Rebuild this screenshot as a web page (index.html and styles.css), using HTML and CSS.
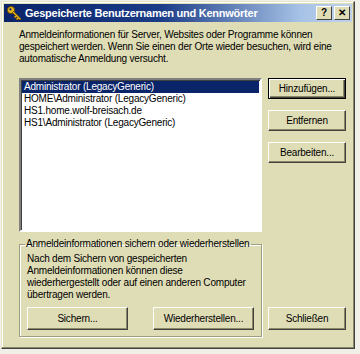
FILE: index.html
```html
<!DOCTYPE html>
<html>
<head>
    <title>Gespeicherte Benutzernamen und Kennwörter</title>
    <link rel="stylesheet" href="styles.css">
</head>
<body>
    <div class="window">
        <div class="titlebar">
            <svg class="title-icon" width="16" height="16" viewBox="0 0 16 16">
                <circle cx="5" cy="5" r="3.6" fill="#e8b820" stroke="#6b4a00" stroke-width="1"/>
                <circle cx="4.4" cy="4.4" r="1.1" fill="#0a246a"/>
                <path d="M7.5 7.5 L14 14 M10.5 10.5 L9 12 M12.5 12.5 L11 14" stroke="#6b4a00" stroke-width="2.4" stroke-linecap="round"/>
                <path d="M7.5 7.5 L14 14 M10.5 10.5 L9 12 M12.5 12.5 L11 14" stroke="#e8b820" stroke-width="1.1" stroke-linecap="round"/>
            </svg>
            <span class="title-text">Gespeicherte Benutzernamen und Kennwörter</span>
            <div class="title-buttons">
                <span class="tbtn">?</span>
                <span class="tbtn">✕</span>
            </div>
        </div>

        <div class="content">
            <p class="intro">Anmeldeinformationen für Server, Websites oder Programme können<br>gespeichert werden. Wenn Sie einen der Orte wieder besuchen, wird eine<br>automatische Anmeldung versucht.</p>

            <div class="main-row">
                <div class="left-col">
                    <div class="listbox">
                        <div class="item selected">Administrator (LegacyGeneric)</div>
                        <div class="item">HOME\Administrator (LegacyGeneric)</div>
                        <div class="item">HS1.home.wolf-breisach.de</div>
                        <div class="item">HS1\Administrator (LegacyGeneric)</div>
                    </div>

                    <fieldset class="group">
                        <legend>Anmeldeinformationen sichern oder wiederherstellen</legend>
                        <p class="group-text">Nach dem Sichern von gespeicherten<br>Anmeldeinformationen können diese<br>wiederhergestellt oder auf einen anderen Computer<br>übertragen werden.</p>
                        <div class="group-buttons">
                            <button type="button" class="btn wide">Sichern...</button>
                            <button type="button" class="btn wide">Wiederherstellen...</button>
                        </div>
                    </fieldset>
                </div>

                <div class="right-col">
                    <button type="button" class="btn default">Hinzufügen...</button>
                    <button type="button" class="btn">Entfernen</button>
                    <button type="button" class="btn">Bearbeiten...</button>
                    <div class="spacer"></div>
                    <button type="button" class="btn tall">Schließen</button>
                </div>
            </div>
        </div>
    </div>
</body>
</html>
```

FILE: styles.css
```css
body {
    margin: 0;
    background-color: #f1f0e8;
    font-family: 'Liberation Sans', Arial, sans-serif;
    font-size: 10px;
    letter-spacing: -0.2px;
    color: #000;
}
.window {
    margin: 1px 0 0 1px;
    width: 348px;
    height: 342px;
    padding: 2px;
    background-color: #dfddb6;
    border: 1px solid;
    border-color: #e8e6c8 #404040 #404040 #e8e6c8;
    box-shadow: inset -1px -1px 0 #8a8866, inset 1px 1px 0 #fff;
    display: flex;
    flex-direction: column;
}
.titlebar {
    height: 18px;
    display: flex;
    align-items: center;
    background: linear-gradient(90deg, #0a246a 0%, #1b3c88 45%, #a6c2e6 85%, #c0d2ea 100%);
    padding: 0 2px;
}
.title-icon {
    margin-right: 3px;
    flex-shrink: 0;
}
.title-text {
    flex: 1;
    color: #fff;
    font-weight: bold;
    font-size: 11px;
    letter-spacing: -0.25px;
    white-space: nowrap;
}
.title-buttons {
    display: flex;
    gap: 2px;
}
.tbtn {
    width: 14px;
    height: 12px;
    background-color: #dfddb6;
    border: 1px solid;
    border-color: #fff #404040 #404040 #fff;
    font-size: 10px;
    font-weight: bold;
    line-height: 12px;
    letter-spacing: 0;
    text-align: center;
}
.content {
    flex: 1;
    padding: 7px 6px 0 15px;
    display: flex;
    flex-direction: column;
}
.intro {
    margin: 0;
    line-height: 12px;
    white-space: nowrap;
}
.main-row {
    display: flex;
    gap: 6px;
    margin-top: 13px;
}
.left-col {
    width: 243px;
    display: flex;
    flex-direction: column;
}
.listbox {
    height: 148px;
    background-color: #fff;
    border: 2px solid;
    border-color: #808080 #fff #fff #808080;
    box-shadow: inset 1px 1px 0 #404040;
    padding: 1px 1px;
}
.item {
    line-height: 12px;
    padding-left: 2px;
    white-space: nowrap;
}
.item.selected {
    background-color: #0a246a;
    color: #fff;
}
.group {
    margin: 6px 0 0 0;
    padding: 3px 7px 6px 7px;
    border: 1px solid #a09e80;
    box-shadow: 1px 1px 0 #fff, inset 1px 1px 0 #fff;
}
.group legend {
    padding: 0 2px 0 1px;
    margin-left: -2px;
    line-height: 12px;
    white-space: nowrap;
}
.group-text {
    margin: 0;
    line-height: 12px;
    white-space: nowrap;
}
.group-buttons {
    display: flex;
    justify-content: space-between;
    margin-top: 6px;
}
.right-col {
    width: 78px;
    display: flex;
    flex-direction: column;
    gap: 11px;
}
.spacer {
    flex: 1;
}
.btn {
    height: 21px;
    padding: 0;
    background-color: #dfddb6;
    font-family: 'Liberation Sans', Arial, sans-serif;
    font-size: 10px;
    letter-spacing: -0.2px;
    color: #000;
    border: 1px solid;
    border-color: #fff #404040 #404040 #fff;
    box-shadow: inset -1px -1px 0 #8a8866;
}
.btn.default {
    border: 1px solid #000;
    box-shadow: inset 1px 1px 0 #fff, inset -1px -1px 0 #404040, inset -2px -2px 0 #8a8866;
}
.btn.wide {
    width: 101px;
    height: 23px;
}
.btn.tall {
    height: 23px;
    margin-bottom: 7px;
}
```
